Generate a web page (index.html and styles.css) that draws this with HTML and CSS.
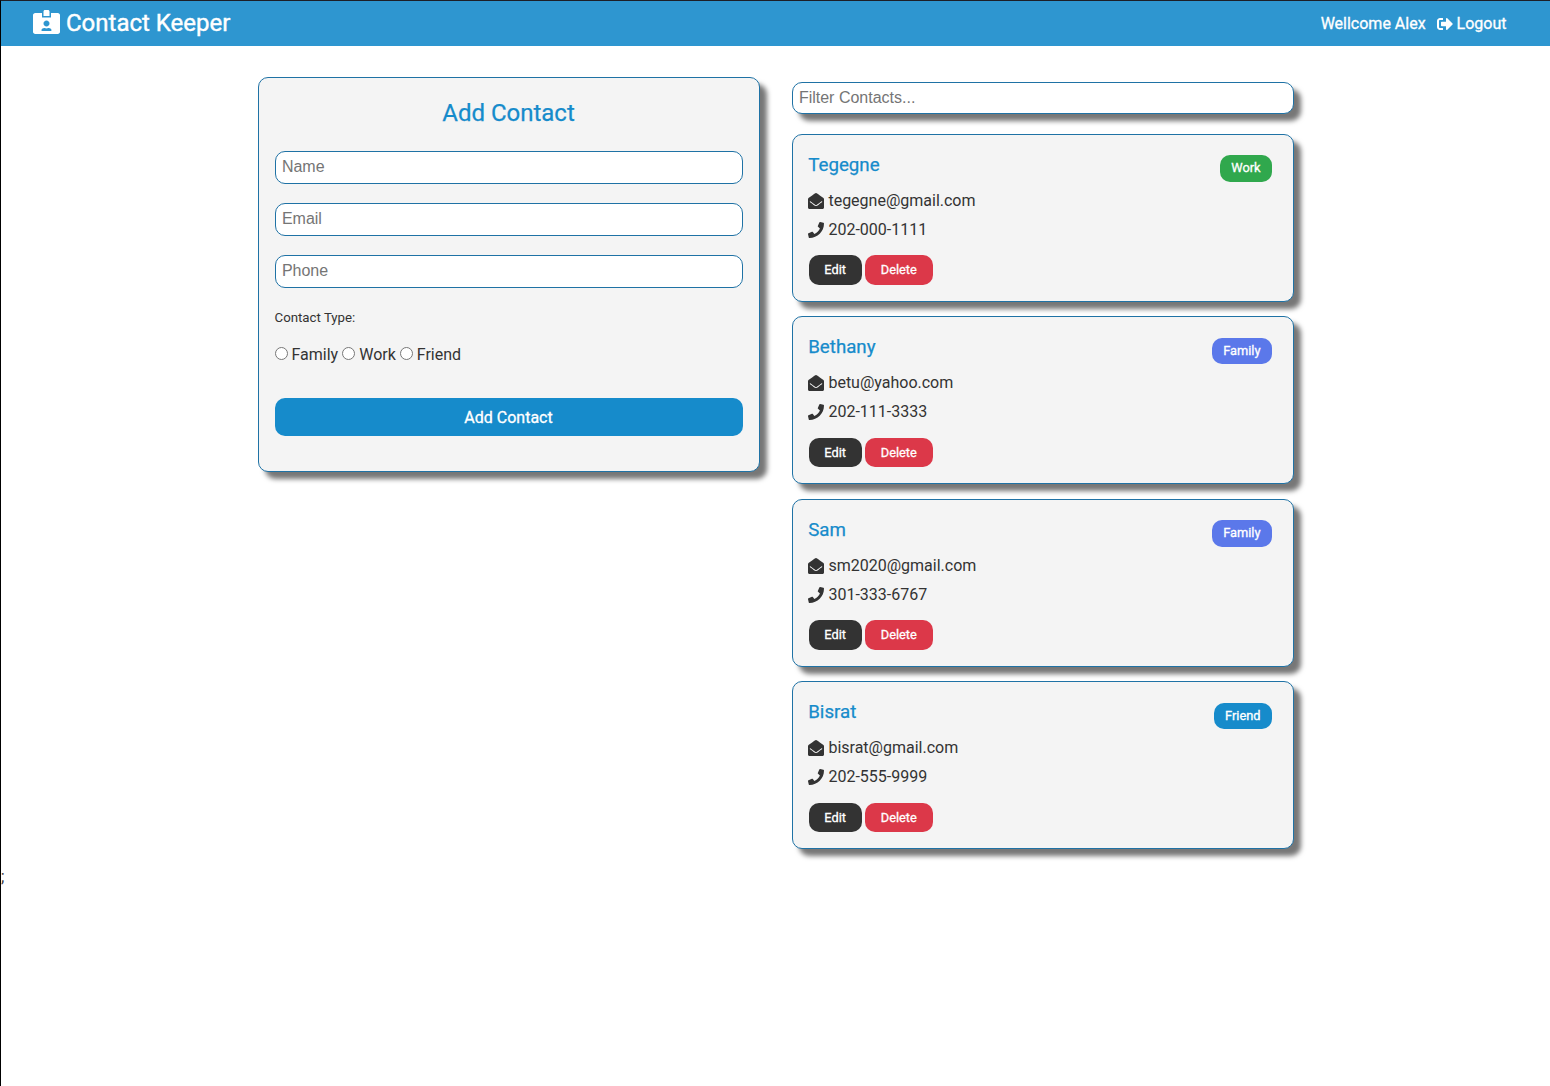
FILE: index.html
```
<!DOCTYPE html>
<html lang="en">
<head>
<meta charset="utf-8">
<title>Contact Keeper</title>
<link rel="stylesheet" href="styles.css">
</head>
<body>
<svg width="0" height="0" class="sprite" aria-hidden="true">
  <symbol id="envelope" viewBox="0 0 512 512"><path d="M512 464c0 26.51-21.49 48-48 48H48c-26.51 0-48-21.49-48-48V200.724a48 48 0 0 1 18.387-37.776c24.913-19.529 45.501-35.365 164.2-121.511C199.412 29.17 232.797-.347 256 .003c23.198-.354 56.596 29.172 73.413 41.433 118.687 86.137 139.303 101.995 164.2 121.512A48 48 0 0 1 512 200.724V464zm-65.666-196.605c-2.563-3.728-7.7-4.595-11.339-1.907-22.845 16.873-55.462 40.705-105.582 77.079-16.825 12.266-50.21 41.781-73.413 41.43-23.211.344-56.559-29.143-73.413-41.43-50.114-36.37-82.734-60.204-105.582-77.079-3.639-2.688-8.776-1.821-11.339 1.907l-9.072 13.196a7.998 7.998 0 0 0 1.839 10.967c22.887 16.899 55.454 40.69 105.303 76.868 20.274 14.781 56.524 47.813 92.264 47.573 35.724.242 71.961-32.771 92.263-47.573 49.85-36.179 82.418-59.97 105.303-76.868a7.998 7.998 0 0 0 1.839-10.967l-9.071-13.196z"/></symbol>
  <symbol id="phone" viewBox="0 0 512 512"><path d="M493.4 24.6l-104-24c-11.3-2.6-22.9 3.3-27.5 13.9l-48 112c-4.2 9.8-1.4 21.3 6.9 28l60.6 49.6c-36 76.7-98.9 140.5-177.2 177.2l-49.6-60.6c-6.8-8.3-18.2-11.1-28-6.9l-112 48C3.9 366.5-2 378.1.6 389.4l24 104C27.1 504.2 36.7 512 48 512c256.1 0 464-207.5 464-464 0-11.2-7.7-20.9-18.6-23.4z"/></symbol>
</svg>
<header class="navbar">
  <h1 class="brand">
    <svg class="brand-icon" viewBox="0 0 576 512"><path d="M528 64H384v96H192V64H48C21.5 64 0 85.5 0 112v352c0 26.5 21.5 48 48 48h480c26.5 0 48-21.5 48-48V112c0-26.5-21.5-48-48-48zM288 224c35.3 0 64 28.7 64 64s-28.7 64-64 64-64-28.7-64-64 28.7-64 64-64zm93.3 224H194.7c-10.4 0-18.8-10-15.6-19.8 8.3-25.6 32.4-44.2 60.9-44.2h8.2c12.3 5.1 25.7 8 39.8 8s27.6-2.9 39.8-8h8.2c28.4 0 52.5 18.5 60.9 44.2 3.2 9.9-5.2 19.8-15.6 19.8zM352 32c0-17.7-14.3-32-32-32h-64c-17.7 0-32 14.3-32 32v96h128V32z"/></svg>
    <span>Contact Keeper</span>
  </h1>
  <nav class="nav-links">
    <span>Wellcome Alex</span>
    <a class="logout"><svg class="icon" viewBox="0 0 512 512"><path d="M497 273L329 441c-15 15-41 4.5-41-17v-96H152c-13.3 0-24-10.7-24-24v-96c0-13.3 10.7-24 24-24h136V88c0-21.4 25.9-32 41-17l168 168c9.3 9.4 9.3 24.6 0 34zM192 436v-40c0-6.6-5.4-12-12-12H96c-17.7 0-32-14.3-32-32V160c0-17.7 14.3-32 32-32h84c6.6 0 12-5.4 12-12V76c0-6.6-5.4-12-12-12H96c-53 0-96 43-96 96v192c0 53 43 96 96 96h84c6.6 0 12-5.4 12-12z"/></svg><span>Logout</span></a>
  </nav>
</header>
<main class="container">
  <form class="panel form">
    <h2 class="form-title">Add Contact</h2>
    <input class="field" type="text" placeholder="Name">
    <input class="field" type="email" placeholder="Email">
    <input class="field" type="text" placeholder="Phone">
    <h5 class="type-title">Contact Type:</h5>
    <div class="types">
      <label class="type"><input class="radio" type="radio" name="type">Family</label>
      <label class="type"><input class="radio" type="radio" name="type">Work</label>
      <label class="type"><input class="radio" type="radio" name="type">Friend</label>
    </div>
    <button class="submit" type="button">Add Contact</button>
  </form>
  <section class="contacts">
    <input class="field filter" type="text" placeholder="Filter Contacts...">
    <article class="panel card">
      <div class="card-head"><h3 class="name">Tegegne</h3><span class="badge work">Work</span></div>
      <p class="line"><svg class="icon"><use href="#envelope"/></svg>tegegne@gmail.com</p>
      <p class="line"><svg class="icon"><use href="#phone"/></svg>202-000-1111</p>
      <div class="actions"><button class="btn edit">Edit</button><button class="btn delete">Delete</button></div>
    </article>
    <article class="panel card">
      <div class="card-head"><h3 class="name">Bethany</h3><span class="badge family">Family</span></div>
      <p class="line"><svg class="icon"><use href="#envelope"/></svg>betu@yahoo.com</p>
      <p class="line"><svg class="icon"><use href="#phone"/></svg>202-111-3333</p>
      <div class="actions"><button class="btn edit">Edit</button><button class="btn delete">Delete</button></div>
    </article>
    <article class="panel card">
      <div class="card-head"><h3 class="name">Sam</h3><span class="badge family">Family</span></div>
      <p class="line"><svg class="icon"><use href="#envelope"/></svg>sm2020@gmail.com</p>
      <p class="line"><svg class="icon"><use href="#phone"/></svg>301-333-6767</p>
      <div class="actions"><button class="btn edit">Edit</button><button class="btn delete">Delete</button></div>
    </article>
    <article class="panel card">
      <div class="card-head"><h3 class="name">Bisrat</h3><span class="badge friend">Friend</span></div>
      <p class="line"><svg class="icon"><use href="#envelope"/></svg>bisrat@gmail.com</p>
      <p class="line"><svg class="icon"><use href="#phone"/></svg>202-555-9999</p>
      <div class="actions"><button class="btn edit">Edit</button><button class="btn delete">Delete</button></div>
    </article>
  </section>
</main>
<p class="stray">;</p>
</body>
</html>
```
FILE: styles.css
```
* { box-sizing: border-box; margin: 0; padding: 0; }
html { height: 100%; overflow: hidden; }
body {
  min-height: 100%;
  border-left: 1px solid #000;
  border-top: 1px solid #1d1f27;
  font-family: Roboto, sans-serif;
  font-size: 16px;
  line-height: 25.6px;
  color: #333;
  background: #fff;
}
.sprite { position: absolute; }
h1, h2, h3 { font-weight: 400; -webkit-text-stroke: 0.25px currentColor; }
button { border: 0; font-family: inherit; color: #fff; border-radius: 10px; font-weight: 400; -webkit-text-stroke: 0.3px #fff; }
.navbar {
  display: flex;
  justify-content: space-between;
  align-items: center;
  height: 45px;
  padding: 0 43.5px 0 32px;
  background: #2e96d0;
  color: #fff;
}
.brand { display: flex; align-items: center; gap: 6px; font-size: 24px; line-height: 38px; padding-bottom: 2px; -webkit-text-stroke-width: 0.4px; }
.brand-icon { width: 27px; height: 24px; fill: currentColor; margin-top: -2px; }
.nav-links { display: flex; gap: 11px; -webkit-text-stroke: 0.3px #fff; }
.logout { display: flex; align-items: center; gap: 4px; }
.icon { width: 16px; height: 16px; fill: currentColor; flex: none; }
.container {
  display: grid;
  grid-template-columns: 1fr 1fr;
  gap: 32px;
  align-items: start;
  width: 1036px;
  margin: 31px auto 0;
}
.panel {
  padding: 16px;
  border: 1px solid #1f72a5;
  border-radius: 10px;
  background: #f4f4f4;
  box-shadow: 7px 7px 5px #777;
}
.form { display: flex; flex-direction: column; height: 395px; }
.form-title { height: 38px; line-height: 38px; font-size: 24px; text-align: center; color: #168bcb; margin-bottom: 19px; }
.field {
  display: block;
  width: 100%;
  height: 33px;
  padding: 0 6.4px 2px;
  border: 1px solid #1f72a5;
  border-radius: 10px;
  background: #fff;
  font: 16px "Liberation Sans", Arial, sans-serif;
  margin-bottom: 19px;
}
.field::placeholder { color: #757575; }
.type-title { font-size: 13.28px; line-height: 21px; font-weight: 400; }
.types { display: flex; gap: 4px; margin: 14px 0 30px; }
.type { display: flex; align-items: center; gap: 4px; }
.radio { width: 13px; height: 13px; margin-top: -2px; }
.submit { height: 38px; padding-top: 2px; font-size: 16px; background: #168bcb; }
.contacts { padding-top: 5px; }
.filter { height: 32px; padding-bottom: 0; margin-bottom: 19.75px; box-shadow: 7px 7px 5px #777; }
.card { height: 168px; margin-bottom: 14.5px; padding: 15px 21px 0 16px; }
.card:last-child { margin-bottom: 14.75px; }
.card-head { display: flex; justify-content: space-between; height: 37.7px; }
.name { font-size: 18.72px; line-height: 30px; color: #168bcb; margin-left: -0.3px; }
.badge { height: 26.5px; margin-top: 5.25px; padding: 0 11px; border-radius: 10px; font-size: 12.8px; line-height: 26.5px; -webkit-text-stroke: 0.3px #fff; color: #fff; }
.work { background: #30a84d; }
.family { background: #5b78ea; }
.friend { background: #168bcb; }
.line { display: flex; align-items: center; gap: 4px; height: 26px; margin-bottom: 3.3px; margin-left: -0.1px; }
.line:nth-child(2) { padding-top: 0.5px; }
.actions { display: flex; gap: 3.2px; margin-top: 12.5px; }
.btn { height: 29.5px; padding: 0 15.8px; font-size: 12.8px; }
.edit { background: #333; }
.delete { background: #dc3849; }
.stray { line-height: 26px; }
```
